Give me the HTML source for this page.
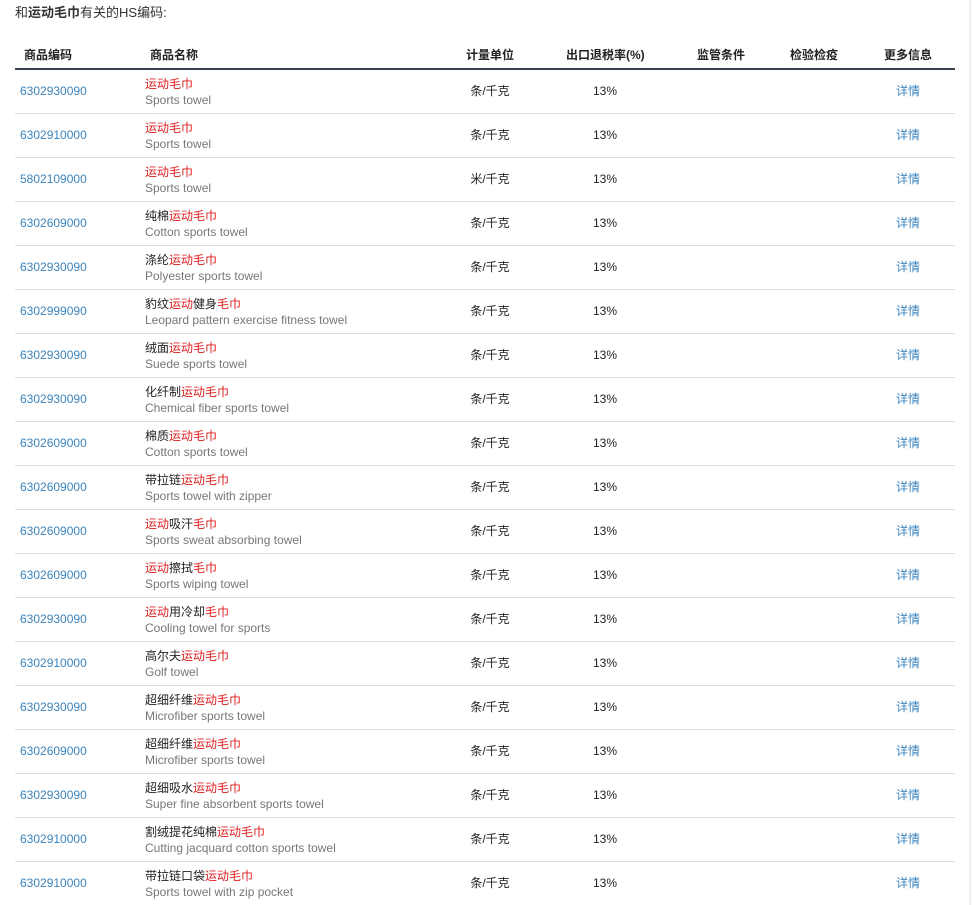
<!DOCTYPE html>
<html><head><meta charset="utf-8">
<style>
html,body{margin:0;padding:0;background:#fff;width:973px;height:905px;overflow:hidden;position:relative}
body{font-family:"Liberation Sans","Noto Sans CJK SC",sans-serif;font-size:12px;color:#222}
.title{position:absolute;left:15px;top:4px;font-size:13px;line-height:18px;color:#333}
.vline{position:absolute;left:969px;top:0;width:2px;height:905px;background:#eee}
.hdr{position:absolute;top:47px;left:0;width:973px;height:16px;font-weight:bold;font-size:12px;line-height:16px;color:#222}
.hdr span{position:absolute;top:0}
.hline{position:absolute;left:15px;top:68px;width:940px;height:2px;background:#3a4150}
.row{position:absolute;left:15px;width:940px;height:43px;border-bottom:1px solid #ddd}
.code{position:absolute;left:5px;top:13px;color:#3b84bd;font-size:12px;line-height:16px}
.nm{position:absolute;left:130px;top:6px;font-size:12px;color:#222;line-height:16px}
.nm i{font-style:normal;color:#e02020}
.nm em{font-style:normal;color:#777;display:block}
.c{position:absolute;top:13px;text-align:center;font-size:12px;line-height:16px;height:16px}
.u{left:445px;width:60px}
.r{left:560px;width:60px}
.d{left:863px;width:60px;color:#3b84bd}
</style></head><body>
<div class="title">和<b>运动毛巾</b>有关的HS编码:</div>
<div class="vline"></div>
<div class="hdr">
<span style="left:24px">商品编码</span>
<span style="left:150px">商品名称</span>
<span style="left:466px">计量单位</span>
<span style="left:566px">出口退税率(%)</span>
<span style="left:697px">监管条件</span>
<span style="left:790px">检验检疫</span>
<span style="left:884px">更多信息</span>
</div>
<div class="hline"></div>

<div class="row" style="top:70px"><span class="code">6302930090</span><div class="nm"><i>运动毛巾</i><em>Sports towel</em></div><span class="c u">条/千克</span><span class="c r">13%</span><span class="c d">详情</span></div>
<div class="row" style="top:114px"><span class="code">6302910000</span><div class="nm"><i>运动毛巾</i><em>Sports towel</em></div><span class="c u">条/千克</span><span class="c r">13%</span><span class="c d">详情</span></div>
<div class="row" style="top:158px"><span class="code">5802109000</span><div class="nm"><i>运动毛巾</i><em>Sports towel</em></div><span class="c u">米/千克</span><span class="c r">13%</span><span class="c d">详情</span></div>
<div class="row" style="top:202px"><span class="code">6302609000</span><div class="nm">纯棉<i>运动毛巾</i><em>Cotton sports towel</em></div><span class="c u">条/千克</span><span class="c r">13%</span><span class="c d">详情</span></div>
<div class="row" style="top:246px"><span class="code">6302930090</span><div class="nm">涤纶<i>运动毛巾</i><em>Polyester sports towel</em></div><span class="c u">条/千克</span><span class="c r">13%</span><span class="c d">详情</span></div>
<div class="row" style="top:290px"><span class="code">6302999090</span><div class="nm">豹纹<i>运动</i>健身<i>毛巾</i><em>Leopard pattern exercise fitness towel</em></div><span class="c u">条/千克</span><span class="c r">13%</span><span class="c d">详情</span></div>
<div class="row" style="top:334px"><span class="code">6302930090</span><div class="nm">绒面<i>运动毛巾</i><em>Suede sports towel</em></div><span class="c u">条/千克</span><span class="c r">13%</span><span class="c d">详情</span></div>
<div class="row" style="top:378px"><span class="code">6302930090</span><div class="nm">化纤制<i>运动毛巾</i><em>Chemical fiber sports towel</em></div><span class="c u">条/千克</span><span class="c r">13%</span><span class="c d">详情</span></div>
<div class="row" style="top:422px"><span class="code">6302609000</span><div class="nm">棉质<i>运动毛巾</i><em>Cotton sports towel</em></div><span class="c u">条/千克</span><span class="c r">13%</span><span class="c d">详情</span></div>
<div class="row" style="top:466px"><span class="code">6302609000</span><div class="nm">带拉链<i>运动毛巾</i><em>Sports towel with zipper</em></div><span class="c u">条/千克</span><span class="c r">13%</span><span class="c d">详情</span></div>
<div class="row" style="top:510px"><span class="code">6302609000</span><div class="nm"><i>运动</i>吸汗<i>毛巾</i><em>Sports sweat absorbing towel</em></div><span class="c u">条/千克</span><span class="c r">13%</span><span class="c d">详情</span></div>
<div class="row" style="top:554px"><span class="code">6302609000</span><div class="nm"><i>运动</i>擦拭<i>毛巾</i><em>Sports wiping towel</em></div><span class="c u">条/千克</span><span class="c r">13%</span><span class="c d">详情</span></div>
<div class="row" style="top:598px"><span class="code">6302930090</span><div class="nm"><i>运动</i>用冷却<i>毛巾</i><em>Cooling towel for sports</em></div><span class="c u">条/千克</span><span class="c r">13%</span><span class="c d">详情</span></div>
<div class="row" style="top:642px"><span class="code">6302910000</span><div class="nm">高尔夫<i>运动毛巾</i><em>Golf towel</em></div><span class="c u">条/千克</span><span class="c r">13%</span><span class="c d">详情</span></div>
<div class="row" style="top:686px"><span class="code">6302930090</span><div class="nm">超细纤维<i>运动毛巾</i><em>Microfiber sports towel</em></div><span class="c u">条/千克</span><span class="c r">13%</span><span class="c d">详情</span></div>
<div class="row" style="top:730px"><span class="code">6302609000</span><div class="nm">超细纤维<i>运动毛巾</i><em>Microfiber sports towel</em></div><span class="c u">条/千克</span><span class="c r">13%</span><span class="c d">详情</span></div>
<div class="row" style="top:774px"><span class="code">6302930090</span><div class="nm">超细吸水<i>运动毛巾</i><em>Super fine absorbent sports towel</em></div><span class="c u">条/千克</span><span class="c r">13%</span><span class="c d">详情</span></div>
<div class="row" style="top:818px"><span class="code">6302910000</span><div class="nm">割绒提花纯棉<i>运动毛巾</i><em>Cutting jacquard cotton sports towel</em></div><span class="c u">条/千克</span><span class="c r">13%</span><span class="c d">详情</span></div>
<div class="row" style="top:862px"><span class="code">6302910000</span><div class="nm">带拉链口袋<i>运动毛巾</i><em>Sports towel with zip pocket</em></div><span class="c u">条/千克</span><span class="c r">13%</span><span class="c d">详情</span></div>
</body></html>
